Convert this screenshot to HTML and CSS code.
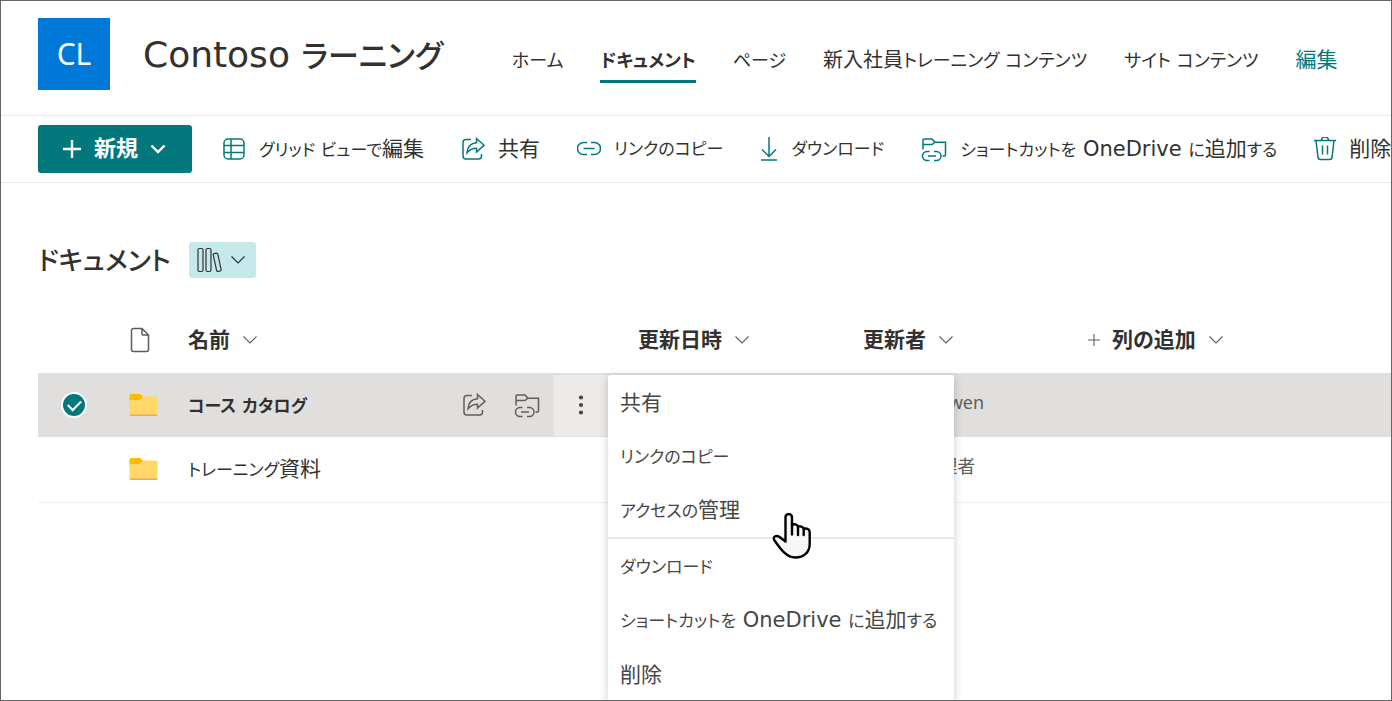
FILE: index.html
```html
<!DOCTYPE html>
<html lang="ja">
<head>
<meta charset="utf-8">
<title>Contoso ラーニング - ドキュメント</title>
<link rel="stylesheet" href="styles.css">
</head>
<body>
<svg class="defs" aria-hidden="true">
  <symbol id="chevron" viewBox="0 0 16 10"><path d="M1.500 1.500 8 8l6.500-6.500"/></symbol>
  <symbol id="share" viewBox="0 0 24 24"><path d="M10 2.500H5a3 3 0 0 0-3 3v13.500a3 3 0 0 0 3 3h12.500a3 3 0 0 0 3-3v-2M15.500 1.500l7.500 6.800-7.500 6.700v-3.700c-4.500 0-7 1.500-9.500 4.500 .3-5.500 3.500-9.500 9.500-10z"/></symbol>
  <symbol id="shortcut" viewBox="0 0 26 25"><path d="M2 12.500V3a1 1 0 0 1 1-1h8l3 3.200h10.500V18a1 1 0 0 1-1 1H21.500M2 7.500h9L14 5.200M8.500 14.500H6a4.500 4.500 0 0 0 0 9H8.500M13 14.500h2.500a4.500 4.500 0 0 1 0 9H13M7 19h8"/></symbol>
</svg>
<div class="page">
  <header class="site">
    <div class="logo">CL</div>
    <h1>Contoso <span>ラーニング</span></h1>
    <nav>
      <a href="#"><span class="kana">ホーム</span></a>
      <a href="#" class="current" aria-current="page"><span class="kana">ドキュメント</span></a>
      <a href="#"><span class="kana">ページ</span></a>
      <a href="#">新入社員<span class="kana">トレーニング コンテンツ</span></a>
      <a href="#"><span class="kana">サイト コンテンツ</span></a>
      <a href="#" class="edit">編集</a>
    </nav>
  </header>

  <div class="toolbar">
    <button class="new">
      <svg class="i20" viewBox="0 0 20 20"><path d="M10 1v18M1 10h18"/></svg>
      <span>新規</span>
      <svg class="i16"><use href="#chevron"/></svg>
    </button>
    <button>
      <svg class="i24" viewBox="0 0 24 24"><rect x="2" y="2" width="20" height="20" rx="4"/><path d="M2 8.500h20M2 15.500h20M9 2v20"/></svg>
      <span><span class="kana">グリッド ビューで</span>編集</span>
    </button>
    <button>
      <svg class="i24"><use href="#share"/></svg>
      <span>共有</span>
    </button>
    <button>
      <svg class="i24" viewBox="0 0 24 24"><path d="M10 5.500H6.500a6 6 0 0 0 0 12H10M14 5.500h3.500a6 6 0 0 1 0 12H14M6.500 11.500h11"/></svg>
      <span class="kana">リンクのコピー</span>
    </button>
    <button>
      <svg class="i18" viewBox="0 0 18 24"><path d="M9 0v19M2 12.500l7 7 7-7M1 23h16"/></svg>
      <span class="kana">ダウンロード</span>
    </button>
    <button>
      <svg class="i26"><use href="#shortcut"/></svg>
      <span><span class="kana">ショートカットを</span> OneDrive <span class="kana">に</span>追加<span class="kana">する</span></span>
    </button>
    <button>
      <svg class="i22" viewBox="0 0 22 24"><path d="M0 3.500h22M7.500 3a3.500 3 0 0 1 7 0M2 3.500l2 17a2.500 2.500 0 0 0 2.500 2h9a2.500 2.500 0 0 0 2.500-2l2-17M8.500 8.500v9M13.500 8.500v9"/></svg>
      <span>削除</span>
    </button>
  </div>

  <main>
    <div class="heading">
      <h2>ドキュメント</h2>
      <button class="view" aria-label="ライブラリの切り替え">
        <svg class="books" viewBox="0 0 26 26"><rect x="2" y="1.500" width="5" height="23" rx="1.500"/><rect x="10" y="1.500" width="5" height="23" rx="1.500"/><path d="M18.300 6.600l2-.4a1.300 1.300 0 0 1 1.500 1l3.300 15.300a1.300 1.300 0 0 1-1 1.500l-2 .4a1.300 1.300 0 0 1-1.500-1L17.300 8.100a1.300 1.300 0 0 1 1-1.500z"/></svg>
        <svg class="i16"><use href="#chevron"/></svg>
      </button>
    </div>

    <table>
      <colgroup><col class="c-check"><col class="c-type"><col class="c-name"><col class="c-mid"><col class="c-mid"><col></colgroup>
      <thead>
        <tr>
          <th></th>
          <th><svg class="doc" viewBox="0 0 20 26"><path d="M3.500 1.500h8.500l6.500 6.500v14.500a2 2 0 0 1-2 2h-13a2 2 0 0 1-2-2v-19a2 2 0 0 1 2-2zM12 1.500v5.500a1 1 0 0 0 1 1h5.500"/></svg></th>
          <th><button>名前 <svg class="i16"><use href="#chevron"/></svg></button></th>
          <th><button>更新日時 <svg class="i16"><use href="#chevron"/></svg></button></th>
          <th><button>更新者 <svg class="i16"><use href="#chevron"/></svg></button></th>
          <th><button><svg class="plus" viewBox="0 0 12 12"><path d="M6 0v12M0 6h12"/></svg>列の追加 <svg class="i16"><use href="#chevron"/></svg></button></th>
        </tr>
      </thead>
      <tbody>
        <tr class="selected">
          <td><input type="checkbox" checked aria-label="コース カタログを選択"></td>
          <td><svg class="folder" viewBox="0 0 28 22"><path class="tab" d="M0 9V1.500Q0 0 1.500 0h9l3 2.500-3 6.500z"/><path class="side" d="M0 6h10l3.500-3.500h13Q28 2.500 28 4v16q0 1.500-1.500 1.500h-25Q0 21.500 0 20z"/><path class="edge" d="M0 20.500h28q0 1.500-1.500 1.500h-25Q0 22 0 20.500z"/></svg></td>
          <td>
            <div class="name-line">
              <a href="#"><span class="kana">コース カタログ</span></a>
              <button class="act" aria-label="共有"><svg class="i24"><use href="#share"/></svg></button>
              <button class="act" aria-label="ショートカットを追加"><svg class="i26"><use href="#shortcut"/></svg></button>
              <div class="more">
                <button aria-label="その他の操作"><svg class="dots" viewBox="0 0 6 20"><circle cx="3" cy="2.500" r="2.100"/><circle cx="3" cy="10" r="2.100"/><circle cx="3" cy="17.500" r="2.100"/></svg></button>
                <div class="menu">
                  <button>共有</button>
                  <button><span class="kana">リンクのコピー</span></button>
                  <button><span><span class="kana">アクセスの</span>管理</span></button>
                  <hr>
                  <button><span class="kana">ダウンロード</span></button>
                  <button><span><span class="kana">ショートカットを</span> OneDrive <span class="kana">に</span>追加<span class="kana">する</span></span></button>
                  <button>削除</button>
                  <svg class="pointer" viewBox="0 0 40 48"><path d="M13.500 30.500V6.500c0-4.500 6.500-4.500 6.500 0v7.500c2-1.500 5.500-.8 6 1.800 2-1 5.200-.3 5.700 2 2.600-1 6 .2 6 3.300V33c0 8.500-6 13.500-14.500 13.500C14 46.500 8 37 2.500 29.500 0 25.500 4.500 24 7.500 26z"/><path d="M20 12v11.500M26 15.500v8.500M31.700 17.500v6.500"/></svg>
                </div>
              </div>
            </div>
          </td>
          <td></td>
          <td class="author">Megan Bowen</td>
          <td></td>
        </tr>
        <tr>
          <td></td>
          <td><svg class="folder" viewBox="0 0 28 22"><path class="tab" d="M0 9V1.500Q0 0 1.500 0h9l3 2.500-3 6.500z"/><path class="side" d="M0 6h10l3.500-3.500h13Q28 2.500 28 4v16q0 1.500-1.500 1.500h-25Q0 21.500 0 20z"/><path class="edge" d="M0 20.500h28q0 1.500-1.500 1.500h-25Q0 22 0 20.500z"/></svg></td>
          <td><a href="#"><span class="kana">トレーニング</span>資料</a></td>
          <td></td>
          <td class="author"><span>システム</span>管理者</td>
          <td></td>
        </tr>
      </tbody>
    </table>
  </main>
</div>
</body>
</html>
```
FILE: styles.css
```css
* { box-sizing: border-box; }

body {
  margin: 0;
  color: #323130;
  background: #fff;
  font: 21px/28px "DejaVu Sans", "Noto Sans CJK JP", sans-serif;
  font-feature-settings: "palt";
}

.page {
  height: 100vh;
  overflow: hidden;
  border: 1px solid #666;
}

.defs { display: none; }

svg {
  display: block;
  flex: none;
  fill: none;
  stroke: currentColor;
  stroke-width: 1.5;
}

a { color: inherit; text-decoration: none; }

button {
  display: flex;
  align-items: center;
  padding: 0;
  border: 0;
  background: none;
  color: inherit;
  font: inherit;
  font-feature-settings: inherit;
  white-space: nowrap;
}

.i16 { width: 16px; height: 10px; }
.i18 { width: 18px; height: 24px; }
.i20 { width: 20px; height: 20px; }
.i22 { width: 22px; height: 24px; }
.i24 { width: 24px; height: 24px; }
.i26 { width: 26px; height: 25px; }

/* Kana is set a little smaller than kanji */
.kana { font-size: 17px; }

/* Site header */
.site {
  display: flex;
  align-items: center;
  height: 115px;
  padding: 0 37px 9px;
  border-bottom: 1px solid #e8e8e8;
  white-space: nowrap;
}

.logo {
  display: grid;
  flex: none;
  place-items: center;
  width: 72px;
  height: 72px;
  background: #0078d7;
  color: #fff;
  font: 30px "Noto Sans", sans-serif;
}

h1 {
  margin: 4px 69px 0 33px;
  font-size: 36px;
  font-weight: 500;
  line-height: 48px;
}

h1 span { font-size: 31px; }

nav {
  display: flex;
  gap: 37px;
  padding-top: 22px;
  font-size: 20px;
}

nav a {
  padding-bottom: 5px;
  border-bottom: 3px solid transparent;
}

nav .kana { font-size: 18px; }

nav .current {
  border-color: #03787c;
  font-weight: 700;
}

nav .edit {
  color: #03787c;
  font-size: 21px;
}

/* Command bar */
.toolbar {
  display: flex;
  align-items: center;
  gap: 37px;
  height: 67px;
  padding-left: 37px;
  border-bottom: 1px solid #e8e8e8;
}

.toolbar button { gap: 13px; }
.toolbar svg { color: #03787c; }

.toolbar .new {
  gap: 12px;
  height: 48px;
  margin-right: -7px;
  padding: 0 26px 0 24px;
  border-radius: 3px;
  background: #03787c;
  color: #fff;
  font-size: 22px;
  font-weight: 700;
}

.toolbar .new svg {
  color: #fff;
  stroke-width: 2.4;
}

/* Library */
main { padding: 59px 0 0 37px; }

.heading {
  display: flex;
  align-items: center;
  gap: 18px;
}

h2 {
  margin: 2px 0 0;
  font-size: 26px;
  font-weight: 500;
  line-height: 34px;
}

.view {
  gap: 8px;
  height: 36px;
  padding: 0 10px 0 7px;
  border-radius: 3px;
  background: #c5e9ea;
}

.view svg { stroke-width: 1.2; }
.books { width: 26px; height: 26px; }

table {
  width: 100%;
  margin-top: 29px;
  border-collapse: collapse;
  table-layout: fixed;
}

.c-check { width: 72px; }
.c-type { width: 78px; }
.c-name { width: 420px; }
.c-mid { width: 225px; }

th {
  height: 66px;
  padding: 0;
  border-bottom: 1px solid #e1dfdd;
  text-align: left;
}

th button {
  gap: 12px;
  font-weight: 700;
}

th .i16, .plus {
  color: #605e5c;
  stroke-width: 1.1;
}

th:nth-child(n+4), td:nth-child(n+4) { padding-left: 30px; }

.doc {
  width: 20px;
  height: 26px;
  margin-left: 20px;
  color: #605e5c;
}

.plus { width: 12px; height: 12px; }

td {
  height: 66px;
  padding: 0;
  border-bottom: 1px solid #f0f0f0;
}

.selected { background: #e1dfdd; }
.selected td { height: 63px; border: 0; }
.selected a { font-weight: 700; }

td input {
  display: block;
  appearance: none;
  width: 26px;
  height: 26px;
  margin: 0 auto;
  border: 2px solid #fff;
  border-radius: 50%;
  background: #03787c;
}

td input::before {
  content: "";
  display: block;
  width: 11px;
  height: 6px;
  margin: 6px auto 0;
  border: solid #fff;
  border-width: 0 0 2px 2px;
  rotate: -45deg;
}

.folder {
  width: 29px;
  height: 22px;
  margin-left: 19px;
  stroke: none;
}

.tab { fill: #ffb900; }
.side { fill: #ffd869; }
.edge { fill: #f5a93d; }

.name-line {
  display: flex;
  align-items: center;
  height: 63px;
}

.name-line > a { flex: 1; }

.act {
  margin-right: 14px;
  color: #605e5c;
}

.act + .act { margin-left: 14px; }

.more {
  position: relative;
  align-self: stretch;
}

.more > button {
  justify-content: center;
  width: 54px;
  height: 61px;
  margin-top: 1px;
  background: #edebe9;
}

.dots {
  width: 6px;
  height: 20px;
  fill: #484644;
  stroke: none;
}

td.author {
  padding-bottom: 6px;
  color: #605e5c;
  font-family: "Noto Sans", "Noto Sans CJK JP", sans-serif;
  font-size: 18px;
}

.author span { font-size: 16px; }

/* Context menu */
.menu {
  position: absolute;
  top: 1px;
  left: 100%;
  z-index: 1;
  width: 346px;
  background: #fff;
  border-radius: 2px;
  box-shadow: 0 2px 10px rgba(0, 0, 0, .2);
  color: #484644;
}

.menu button {
  width: 100%;
  height: 54px;
  padding: 2px 12px 0;
}

.menu hr {
  height: 2px;
  margin: 0;
  border: 0;
  background: #e8e8e8;
}

.pointer {
  position: absolute;
  top: 136px;
  left: 164px;
  width: 40px;
  height: 48px;
  fill: #f7f7f7;
  stroke: #000;
  stroke-width: 2.4;
  stroke-linecap: round;
  stroke-linejoin: round;
}
```
